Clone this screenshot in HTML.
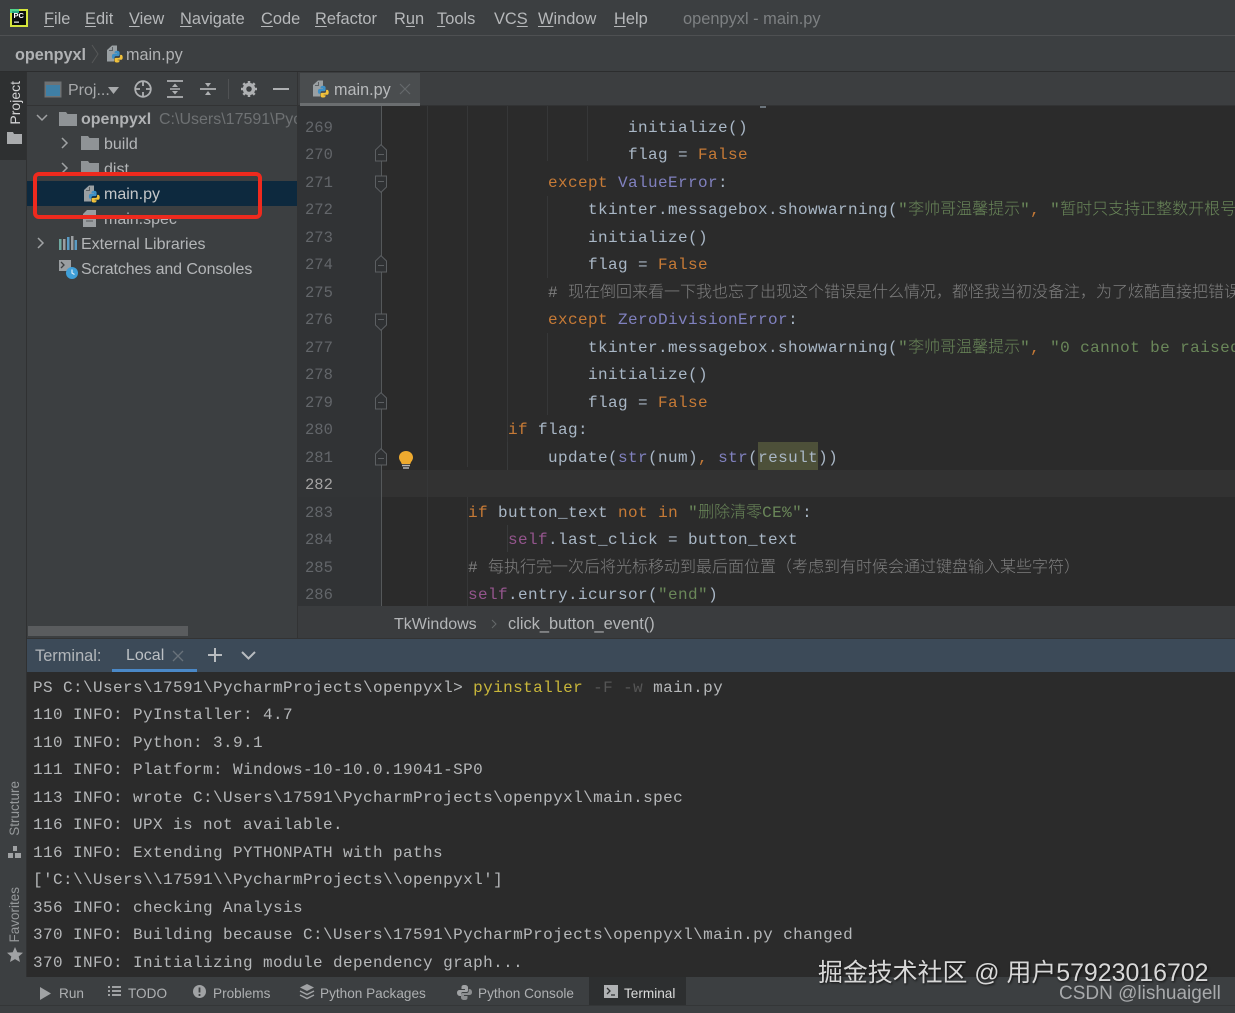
<!DOCTYPE html>
<html lang="zh">
<head>
<meta charset="utf-8">
<title>openpyxl - main.py</title>
<style>
html,body{margin:0;padding:0;background:#3c3f41}
#app{position:relative;width:1235px;height:1013px;overflow:hidden;background:#3c3f41;font-family:"Liberation Sans","Noto Sans CJK SC",sans-serif;color:#b4b6b8}
#app *{box-sizing:border-box}
.a{position:absolute;white-space:nowrap}
.m{font-size:16.4px;top:9px;line-height:20px;color:#b6b8ba}
.m u{text-underline-offset:2px}
.t{font-size:16px;line-height:25px;color:#b4b6b8}
.ln{position:absolute;left:305px;margin-top:1px;font:15.5px/27px "Liberation Mono",monospace;color:#63666a;white-space:pre}
.c{position:absolute;margin-top:1px;font:16px/27px "Liberation Mono",monospace;letter-spacing:.4px;color:#a9b7c6;white-space:pre}
.c i{font-style:normal;font-family:"Noto Sans CJK SC",sans-serif;letter-spacing:0;font-weight:300;line-height:0}
.kw{color:#c67a36}.s{color:#6a8759}.b{color:#8081bf}.se{color:#94558d}
.g{position:absolute;top:106px;height:500px;width:1px;background:#363738}
.k{position:absolute;left:33px;margin-top:1px;font:16px/27px "Liberation Mono",monospace;letter-spacing:.4px;color:#b5b7b9;white-space:pre}
.bt{position:absolute;top:985px;font-size:13.6px;line-height:18px;color:#aeb0b2;white-space:nowrap}
.v{position:absolute;writing-mode:vertical-rl;transform:rotate(180deg);font-size:13.5px;line-height:16px;white-space:nowrap}
svg{position:absolute;overflow:visible}
</style>
</head>
<body>
<div id="app">
<svg width="0" height="0" style="position:absolute">
  <symbol id="py" viewBox="0 0 18 18">
    <path d="M1 5 6 0.5h5v9H8v7H1z" fill="#9aa0a3"/>
    <path d="M3 5.5h3.5V2" fill="none" stroke="#5d6164" stroke-width="1"/>
    <path d="M8.5 7.500c0-1.200 1-1.800 2.500-1.800s2.600.6 2.600 1.800v2.300c0 .8-.6 1.300-1.400 1.300H10c-.9 0-1.500.6-1.500 1.500v1.200H7.300c-1 0-1.400-1-1.400-2.400s.5-2.500 1.500-2.500h3.700v-.5H8.500z" fill="#3d8fc6"/>
    <path d="M13.600 15.700c0 1.200-1 1.800-2.500 1.800s-2.600-.6-2.600-1.800v-1.500c0-.8.6-1.300 1.400-1.300h2.700c.9 0 1.500-.6 1.500-1.500v-1.500h1.100c1 0 1.500 1 1.500 2.500s-.5 2.400-1.500 2.400h-3.600v.5h2z" fill="#f2c23a"/>
  </symbol>
  <symbol id="folder" viewBox="0 0 18 14">
    <path d="M0 0h7l1.500 2H18v12H0z" fill="#8f9396"/>
  </symbol>
  <symbol id="foldu" viewBox="0 0 12 18">
    <path d="M.5 6 6 .7 11.500 6v11H.5zM3 10.500h6" fill="#2f3133" stroke="#5c5f62"/>
  </symbol>
  <symbol id="foldd" viewBox="0 0 12 18">
    <path d="M.5 1h11v11L6 17.300.5 12zM3 6.500h6" fill="#2f3133" stroke="#5c5f62"/>
  </symbol>
</svg>

<!-- Menu bar -->
<div class="a" style="left:0;top:0;width:1235px;height:36px;background:#3c3f41;border-bottom:1px solid #4e5052"></div>
<svg style="left:10px;top:9px" width="18" height="18" viewBox="0 0 18 18">
  <rect width="18" height="18" fill="#d6e63c"/><rect x="2" y="2" width="14" height="14" fill="#0b0f0d"/>
  <rect x="0" y="0" width="9" height="4" fill="#2fcf9f" opacity=".8"/><rect x="4" y="12.500" width="5" height="1.300" fill="#ddd"/>
  <text x="3.500" y="9" font-family="Liberation Sans" font-size="7.500" font-weight="700" fill="#fff">PC</text>
</svg>
<div class="a m" style="left:44px"><u>F</u>ile</div>
<div class="a m" style="left:85px"><u>E</u>dit</div>
<div class="a m" style="left:129px"><u>V</u>iew</div>
<div class="a m" style="left:180px"><u>N</u>avigate</div>
<div class="a m" style="left:261px"><u>C</u>ode</div>
<div class="a m" style="left:315px"><u>R</u>efactor</div>
<div class="a m" style="left:394px">R<u>u</u>n</div>
<div class="a m" style="left:437px"><u>T</u>ools</div>
<div class="a m" style="left:494px">VC<u>S</u></div>
<div class="a m" style="left:538px"><u>W</u>indow</div>
<div class="a m" style="left:614px"><u>H</u>elp</div>
<div class="a m" style="left:683px;color:#7d8082">openpyxl - main.py</div>

<!-- Navigation bar -->
<div class="a" style="left:15px;top:45px;font-size:16.200px;line-height:20px;font-weight:700;color:#b0b2b4">openpyxl</div>
<svg style="left:90px;top:44px" width="10" height="20"><path d="M2 1l6 9-6 9" fill="none" stroke="#565859"/></svg>
<svg style="left:106px;top:45px" width="18" height="18"><use href="#py"/></svg>
<div class="a" style="left:126px;top:45px;font-size:16.200px;line-height:20px;color:#b0b2b4">main.py</div>
<div class="a" style="left:0;top:71px;width:1235px;height:1px;background:#2c2d2e"></div>

<!-- Left strip -->
<div class="a" style="left:0;top:72px;width:27px;height:88px;background:#2e3031"></div>
<div class="a" style="left:26px;top:72px;width:1px;height:905px;background:#303132"></div>
<div class="v" style="left:7px;top:81px;color:#d4d5d6;font-size:14px">Project</div>
<svg style="left:7px;top:132px" width="15" height="12"><path d="M0 0h6l1 2h8v10H0z" fill="#a9abad"/></svg>
<div class="v" style="left:7px;top:781px;color:#96999b">Structure</div>
<svg style="left:8px;top:846px" width="14" height="13"><path d="M5 0h4v5H5zM0 7h5v5H0zM7 7h6v5H7z" fill="#a0a2a4"/></svg>
<div class="v" style="left:7px;top:887px;color:#96999b">Favorites</div>
<svg style="left:7px;top:947px" width="16" height="16" viewBox="0 0 16 16"><path d="M8 0l2.300 5.200 5.700.5-4.300 3.800 1.300 5.500L8 12.100 3 15l1.300-5.500L0 5.700l5.700-.5z" fill="#a0a2a4"/></svg>

<!-- Project header -->
<div class="a" style="left:27px;top:105px;width:271px;height:1px;background:#323334"></div>
<svg style="left:44px;top:81px" width="18" height="17"><rect x=".5" y=".5" width="17" height="16" fill="#6e7274"/><rect x="2" y="4" width="14" height="11" fill="#3f7fa5"/></svg>
<div class="a" style="left:68px;top:81px;font-size:16px;line-height:20px;color:#a8aaac">Proj...</div>
<svg style="left:108px;top:87px" width="11" height="7"><path d="M0 0h11L5.500 7z" fill="#a8aaac"/></svg>
<svg style="left:134px;top:80px" width="18" height="18" viewBox="0 0 18 18" fill="none" stroke="#aeb0b2" stroke-width="1.800"><circle cx="9" cy="9" r="7.800"/><path d="M9 1v5M9 12v5M1 9h5M12 9h5"/></svg>
<svg style="left:167px;top:80px" width="16" height="18" viewBox="0 0 16 18" fill="none" stroke="#aeb0b2" stroke-width="1.800"><path d="M0 1h16M0 17h16"/><path d="M8 3.500l3 3.500H5zM8 14.500l-3-3.500h6z" fill="#aeb0b2" stroke="none"/><path d="M3 9h10" stroke-width="1.500"/></svg>
<svg style="left:200px;top:80px" width="16" height="18" viewBox="0 0 16 18" fill="none"><path d="M0 9h16" stroke="#aeb0b2" stroke-width="1.800"/><path d="M8 7l-3-4h6zM8 11l3 4H5z" fill="#aeb0b2"/></svg>
<div class="a" style="left:228px;top:79px;width:1px;height:20px;background:#505254"></div>
<svg style="left:241px;top:81px" width="16" height="16" viewBox="0 0 16 16"><circle cx="8" cy="8" r="4.500" fill="none" stroke="#aeb0b2" stroke-width="3.500"/><path d="M8 0v3M8 13v3M0 8h3M13 8h3M2.300 2.300l2 2M11.700 11.700l2 2M2.300 13.700l2-2M11.700 4.300l2-2" stroke="#aeb0b2" stroke-width="2.500"/></svg>
<div class="a" style="left:273px;top:88px;width:16px;height:2px;background:#aeb0b2"></div>

<!-- Project tree -->
<svg style="left:36px;top:114px" width="12" height="8"><path d="M1 1l5 5 5-5" fill="none" stroke="#a0a2a4" stroke-width="1.500"/></svg>
<svg style="left:59px;top:112px" width="18" height="14"><use href="#folder"/></svg>
<div class="a t" style="left:81px;top:107px;font-weight:700;color:#b0b2b4">openpyxl</div>
<div class="a" style="left:159px;top:107px;width:138px;overflow:hidden;font-size:16px;line-height:25px;color:#6e7173">C:\Users\17591\PycharmProjects</div>
<svg style="left:61px;top:137px" width="8" height="12"><path d="M1 1l5 5-5 5" fill="none" stroke="#a0a2a4" stroke-width="1.500"/></svg>
<svg style="left:81px;top:136px" width="18" height="14"><use href="#folder"/></svg>
<div class="a t" style="left:104px;top:132px">build</div>
<svg style="left:61px;top:162px" width="8" height="12"><path d="M1 1l5 5-5 5" fill="none" stroke="#a0a2a4" stroke-width="1.500"/></svg>
<svg style="left:81px;top:161px" width="18" height="14"><use href="#folder"/></svg>
<div class="a t" style="left:104px;top:157px">dist</div>
<div class="a" style="left:27px;top:181px;width:270px;height:25px;background:#0d293e"></div>
<svg style="left:83px;top:185px" width="18" height="18"><use href="#py"/></svg>
<div class="a t" style="left:104px;top:182px;color:#c4c6c8">main.py</div>
<svg style="left:83px;top:210px" width="14" height="17"><path d="M0 4l4-4h9v17H0z" fill="#9a9ea1"/><path d="M3 8h7M3 11h7" stroke="#55585a"/></svg>
<div class="a t" style="left:104px;top:207px">main.spec</div>
<div class="a" style="left:33px;top:172px;width:229px;height:47px;border:4px solid #ee2a1e;border-radius:6px"></div>
<svg style="left:37px;top:237px" width="8" height="12"><path d="M1 1l5 5-5 5" fill="none" stroke="#a0a2a4" stroke-width="1.500"/></svg>
<svg style="left:59px;top:236px" width="18" height="14"><path d="M0 3h2.500v11H0z" fill="#6fa8a0"/><path d="M4 3h2.500v11H4z" fill="#9a9ea1"/><path d="M8 1h2.500v13H8z" fill="#5a9bc4"/><path d="M12 0h2.500v14H12z" fill="#9a9ea1"/><path d="M15.500 4H18v10h-2.500z" fill="#5a9bc4"/></svg>
<div class="a t" style="left:81px;top:232px">External Libraries</div>
<svg style="left:59px;top:260px" width="19" height="19" viewBox="0 0 19 19"><rect width="12" height="11" fill="#9a9ea1"/><path d="M2 2l3 3-3 3" fill="none" stroke="#3c3f41" stroke-width="1.300"/><circle cx="13" cy="13" r="6" fill="#3f9fd8"/><path d="M13 9.500V13l2.500 1.500" fill="none" stroke="#d8eaf5" stroke-width="1.200"/></svg>
<div class="a t" style="left:81px;top:257px;letter-spacing:-.1px">Scratches and Consoles</div>
<div class="a" style="left:28px;top:626px;width:160px;height:10px;background:#5a5c5e"></div>
<div class="a" style="left:297px;top:72px;width:1px;height:566px;background:#323334"></div>

<!-- Tabs -->
<div class="a" style="left:298px;top:72px;width:937px;height:34px;background:#3c3e40;border-bottom:1px solid #323334"></div>
<div class="a" style="left:300px;top:73px;width:120px;height:33px;background:#4a4d4f;border-bottom:3px solid #6b6e70"></div>
<svg style="left:312px;top:80px" width="18" height="18"><use href="#py"/></svg>
<div class="a" style="left:334px;top:80px;font-size:16.200px;line-height:20px;color:#b8babc">main.py</div>
<svg style="left:400px;top:84px" width="10" height="10"><path d="M0 0l10 10M10 0L0 10" stroke="#66696b" stroke-width="1.200"/></svg>

<!-- Editor -->
<div class="a" style="left:298px;top:106px;width:937px;height:500px;background:#2b2b2b;overflow:hidden"></div>
<div class="a" style="left:298px;top:106px;width:84px;height:500px;background:#313335"></div>
<div class="a" style="left:382px;top:470px;width:853px;height:27px;background:#323232"></div>
<div class="a" style="left:298px;top:470px;width:84px;height:27px;background:#323436"></div>
<div class="a" style="left:381px;top:106px;width:1px;height:500px;background:#55585a"></div>
<div class="g" style="left:427px"></div>
<div class="g" style="left:467px;height:361px"></div>
<div class="a" style="left:467px;top:497px;width:1px;height:109px;background:#363738"></div>
<div class="g" style="left:507px;height:336px"></div>
<div class="a" style="left:507px;top:525px;width:1px;height:27px;background:#383a3b"></div>
<div class="g" style="left:547px;height:55px"></div>
<div class="a" style="left:547px;top:196px;width:1px;height:82px;background:#363738"></div>
<div class="a" style="left:547px;top:333px;width:1px;height:82px;background:#363738"></div>
<div class="a" style="left:507px;top:442px;width:1px;height:28px;background:#383a3b"></div>
<div class="a" style="left:587px;top:106px;width:1px;height:55px;background:#363738"></div>
<div class="a" style="left:760px;top:106px;width:6px;height:2px;background:#6b747c"></div>

<svg style="left:375px;top:144px" width="12" height="18"><use href="#foldu"/></svg>
<svg style="left:375px;top:175px" width="12" height="18"><use href="#foldd"/></svg>
<svg style="left:375px;top:255px" width="12" height="18"><use href="#foldu"/></svg>
<svg style="left:375px;top:313px" width="12" height="18"><use href="#foldd"/></svg>
<svg style="left:375px;top:392px" width="12" height="18"><use href="#foldu"/></svg>
<svg style="left:375px;top:448px" width="12" height="18"><use href="#foldu"/></svg>
<svg style="left:399px;top:451px" width="14" height="19" viewBox="0 0 14 19"><path d="M7 0c3.800 0 7 2.700 7 6.500 0 2.700-2 4-2.700 6.500H2.700C2 10.500 0 9.200 0 6.500 0 2.700 3.200 0 7 0z" fill="#eeaa2f"/><path d="M3 14.500h8M4 17h6" stroke="#b5b5b5" stroke-width="1.500"/></svg>

<div class="ln" style="top:114px">269</div>
<div class="ln" style="top:141px">270</div>
<div class="ln" style="top:169px">271</div>
<div class="ln" style="top:196px">272</div>
<div class="ln" style="top:224px">273</div>
<div class="ln" style="top:251px">274</div>
<div class="ln" style="top:279px">275</div>
<div class="ln" style="top:306px">276</div>
<div class="ln" style="top:334px">277</div>
<div class="ln" style="top:361px">278</div>
<div class="ln" style="top:389px">279</div>
<div class="ln" style="top:416px">280</div>
<div class="ln" style="top:444px">281</div>
<div class="ln" style="top:471px;color:#a4a3a3">282</div>
<div class="ln" style="top:499px">283</div>
<div class="ln" style="top:526px">284</div>
<div class="ln" style="top:554px">285</div>
<div class="ln" style="top:581px">286</div>

<div class="c" style="left:628px;top:114px">initialize()</div>
<div class="c" style="left:628px;top:141px">flag = <span class="kw">False</span></div>
<div class="c" style="left:548px;top:169px"><span class="kw">except</span> <span class="b">ValueError</span>:</div>
<div class="c" style="left:588px;top:196px">tkinter.messagebox.showwarning(<span class="s">"<i>李帅哥温馨提示</i>"</span><span class="kw">,</span> <span class="s">"<i>暂时只支持正整数开根号</i></span></div>
<div class="c" style="left:588px;top:224px">initialize()</div>
<div class="c" style="left:588px;top:251px">flag = <span class="kw">False</span></div>
<div class="c" style="left:548px;top:279px;color:#7f7f7f"># <i>现在倒回来看一下我也忘了出现这个错误是什么情况，都怪我当初没备注，为了炫酷直接把错误</i></div>
<div class="c" style="left:548px;top:306px"><span class="kw">except</span> <span class="b">ZeroDivisionError</span>:</div>
<div class="c" style="left:588px;top:334px">tkinter.messagebox.showwarning(<span class="s">"<i>李帅哥温馨提示</i>"</span><span class="kw">,</span> <span class="s">"0 cannot be raised</span></div>
<div class="c" style="left:588px;top:361px">initialize()</div>
<div class="c" style="left:588px;top:389px">flag = <span class="kw">False</span></div>
<div class="c" style="left:508px;top:416px"><span class="kw">if</span> flag:</div>
<div class="a" style="left:758px;top:442px;width:60px;height:28px;background:#4d5039"></div>
<div class="c" style="left:548px;top:444px">update(<span class="b">str</span>(num)<span class="kw">,</span> <span class="b">str</span>(result))</div>
<div class="c" style="left:468px;top:499px"><span class="kw">if</span> button_text <span class="kw">not</span> <span class="kw">in</span> <span class="s">"<i>删除清零</i>CE%"</span>:</div>
<div class="c" style="left:508px;top:526px"><span class="se">self</span>.last_click = button_text</div>
<div class="c" style="left:468px;top:554px;color:#7f7f7f"># <i>每执行完一次后将光标移动到最后面位置（考虑到有时候会通过键盘输入某些字符）</i></div>
<div class="c" style="left:468px;top:581px"><span class="se">self</span>.entry.icursor(<span class="s">"end"</span>)</div>

<!-- Editor breadcrumb -->
<div class="a" style="left:298px;top:606px;width:937px;height:32px;background:#3a3c3e"></div>
<div class="a" style="left:394px;top:615px;font-size:16px;line-height:20px;color:#b4b6b8">TkWindows</div>
<svg style="left:491px;top:619px" width="6" height="10"><path d="M1 1l4 4-4 4" fill="none" stroke="#66696b"/></svg>
<div class="a" style="left:508px;top:614px;font-size:16.400px;line-height:20px;color:#b4b6b8">click_button_event()</div>

<!-- Terminal header -->
<div class="a" style="left:27px;top:638px;width:1208px;height:34px;background:#3c4a58;border-top:1px solid #333"></div>
<div class="a" style="left:35px;top:646px;font-size:16.400px;line-height:20px;color:#b2b6ba">Terminal:</div>
<div class="a" style="left:126px;top:646px;font-size:16px;line-height:20px;color:#bcc0c4">Local</div>
<svg style="left:173px;top:651px" width="10" height="10"><path d="M0 0l10 10M10 0L0 10" stroke="#69727b" stroke-width="1.300"/></svg>
<div class="a" style="left:112px;top:669px;width:85px;height:3px;background:#4a88c7"></div>
<svg style="left:208px;top:648px" width="14" height="14"><path d="M7 0v14M0 7h14" stroke="#b8bcc0" stroke-width="2"/></svg>
<svg style="left:241px;top:651px" width="15" height="9"><path d="M1 1l6.500 6.500L14 1" fill="none" stroke="#b8bcc0" stroke-width="2"/></svg>

<!-- Terminal body -->
<div class="a" style="left:27px;top:672px;width:1208px;height:305px;background:#2b2b2b"></div>
<div class="k" style="top:674px">PS C:\Users\17591\PycharmProjects\openpyxl&gt; <span style="color:#c8b63a">pyinstaller</span> <span style="color:#555">-F</span> <span style="color:#555">-w</span> main.py</div>
<div class="k" style="top:701px">110 INFO: PyInstaller: 4.7</div>
<div class="k" style="top:729px">110 INFO: Python: 3.9.1</div>
<div class="k" style="top:756px">111 INFO: Platform: Windows-10-10.0.19041-SP0</div>
<div class="k" style="top:784px">113 INFO: wrote C:\Users\17591\PycharmProjects\openpyxl\main.spec</div>
<div class="k" style="top:811px">116 INFO: UPX is not available.</div>
<div class="k" style="top:839px">116 INFO: Extending PYTHONPATH with paths</div>
<div class="k" style="top:866px">['C:\\Users\\17591\\PycharmProjects\\openpyxl']</div>
<div class="k" style="top:894px">356 INFO: checking Analysis</div>
<div class="k" style="top:921px">370 INFO: Building because C:\Users\17591\PycharmProjects\openpyxl\main.py changed</div>
<div class="k" style="top:949px">370 INFO: Initializing module dependency graph...</div>

<!-- Bottom tool bar -->
<div class="a" style="left:0;top:977px;width:1235px;height:36px;background:#3c3f41"></div>
<div class="a" style="left:0;top:1005px;width:1235px;height:1px;background:#343637"></div>
<div class="a" style="left:589px;top:977px;width:97px;height:28px;background:#2d2f30"></div>
<svg style="left:40px;top:987px" width="11" height="13"><path d="M0 0l11 6.500L0 13z" fill="#a0a2a4"/></svg>
<div class="bt" style="left:59px">Run</div>
<svg style="left:108px;top:986px" width="13" height="12"><path d="M0 1h2M4 1h9M0 5h2M4 5h9M0 9h2M4 9h9" stroke="#a0a2a4" stroke-width="2"/></svg>
<div class="bt" style="left:128px">TODO</div>
<svg style="left:193px;top:985px" width="13" height="13"><circle cx="6.500" cy="6.500" r="6.500" fill="#a0a2a4"/><path d="M6.500 2.500v5M6.500 9v2" stroke="#3c3f41" stroke-width="1.800"/></svg>
<div class="bt" style="left:213px">Problems</div>
<svg style="left:299px;top:984px" width="16" height="16" viewBox="0 0 16 16"><path d="M8 0l7 3.500L8 7 1 3.500z" fill="#a0a2a4"/><path d="M1 7l7 3.500L15 7M1 11l7 3.500L15 11" fill="none" stroke="#a0a2a4" stroke-width="1.500"/></svg>
<div class="bt" style="left:320px">Python Packages</div>
<svg style="left:457px;top:985px" width="15" height="15" viewBox="0 0 15 15"><path d="M7.500 0C5 0 4.500 1 4.500 2.500V4h3.500v1H3C1 5 0 6 0 7.800S1 11 3 11h1V9c0-1.200 1-2 2-2h3.500C10.500 7 11 6.400 11 5.500v-3C11 1 9.800 0 7.500 0z" fill="#a0a2a4"/><path d="M7.500 15c2.500 0 3-1 3-2.500V11H7v-1h5c2 0 3-1 3-2.800S14 4 12 4h-.300v2c0 1.200-1 2-2 2H5.500C4.500 8 4 8.600 4 9.500v3C4 14 5.200 15 7.500 15z" fill="#8c8e90"/></svg>
<div class="bt" style="left:478px">Python Console</div>
<svg style="left:604px;top:985px" width="14" height="13"><rect width="14" height="13" fill="#b0b2b4"/><path d="M3 3l3 3-3 3M7 10h4" fill="none" stroke="#2d2f30" stroke-width="1.300"/></svg>
<div class="bt" style="left:624px;color:#dcdcdc">Terminal</div>

<!-- Watermarks -->
<div class="a" style="left:818px;top:956px;font-size:24.900px;line-height:34px;color:#d8d8d8;text-shadow:1px 1px 2px #111">掘金技术社区 @ 用户57923016702</div>
<div class="a" style="left:1059px;top:981px;font-size:19px;line-height:25px;color:#a8aaac">CSDN @lishuaigell</div>
</div>
</body>
</html>
